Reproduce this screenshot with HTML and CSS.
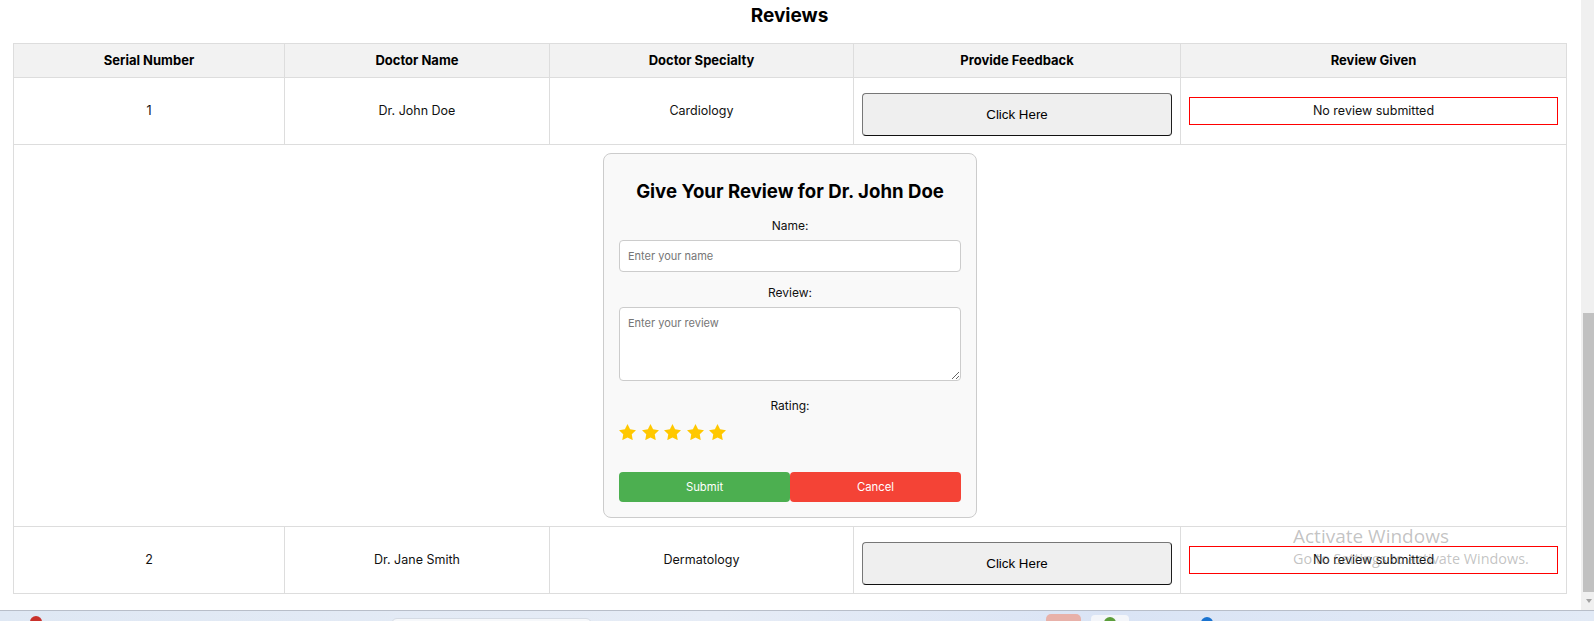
FILE: index.html
```html
<!DOCTYPE html>
<html lang="en">
<head>
<meta charset="utf-8">
<title>Reviews</title>
<link rel="stylesheet" href="styles.css">
</head>
<body>
<div class="screen">
  <div class="browser">
    <main class="page">
      <h2 class="title">Reviews</h2>
      <table class="reviews">
        <colgroup>
          <col class="col-serial">
          <col class="col-name">
          <col class="col-spec">
          <col class="col-feedback">
          <col class="col-given">
        </colgroup>
        <thead>
          <tr>
            <th>Serial Number</th>
            <th>Doctor Name</th>
            <th>Doctor Specialty</th>
            <th>Provide Feedback</th>
            <th>Review Given</th>
          </tr>
        </thead>
        <tbody>
          <tr>
            <td>1</td>
            <td>Dr. John Doe</td>
            <td>Cardiology</td>
            <td><button class="feedback-btn" type="button">Click Here</button></td>
            <td><div class="review-box">No review submitted</div></td>
          </tr>
          <tr class="form-row">
            <td colspan="5">
              <form class="review-card">
                <h3 class="card-title">Give Your Review for Dr. John Doe</h3>
                <label class="lbl lbl-name" for="rname">Name:</label>
                <input class="field" id="rname" type="text" placeholder="Enter your name">
                <label class="lbl lbl-review" for="rtext">Review:</label>
                <textarea class="field area" id="rtext" placeholder="Enter your review"></textarea>
                <label class="lbl lbl-rating">Rating:</label>
                <div class="stars">
                  <svg class="star" viewBox="2 2 20 19.3"><path d="M12 2l3.09 6.26L22 9.27l-5 4.87 1.18 6.88L12 17.77l-6.18 3.25L7 14.14 2 9.27l6.91-1.01L12 2z"/></svg>
                  <svg class="star" viewBox="2 2 20 19.3"><path d="M12 2l3.09 6.26L22 9.27l-5 4.87 1.18 6.88L12 17.77l-6.18 3.25L7 14.14 2 9.27l6.91-1.01L12 2z"/></svg>
                  <svg class="star" viewBox="2 2 20 19.3"><path d="M12 2l3.09 6.26L22 9.27l-5 4.87 1.18 6.88L12 17.77l-6.18 3.25L7 14.14 2 9.27l6.91-1.01L12 2z"/></svg>
                  <svg class="star" viewBox="2 2 20 19.3"><path d="M12 2l3.09 6.26L22 9.27l-5 4.87 1.18 6.88L12 17.77l-6.18 3.25L7 14.14 2 9.27l6.91-1.01L12 2z"/></svg>
                  <svg class="star" viewBox="2 2 20 19.3"><path d="M12 2l3.09 6.26L22 9.27l-5 4.87 1.18 6.88L12 17.77l-6.18 3.25L7 14.14 2 9.27l6.91-1.01L12 2z"/></svg>
                </div>
                <div class="actions">
                  <button class="act submit" type="button">Submit</button>
                  <button class="act cancel" type="button">Cancel</button>
                </div>
              </form>
            </td>
          </tr>
          <tr>
            <td>2</td>
            <td>Dr. Jane Smith</td>
            <td>Dermatology</td>
            <td><button class="feedback-btn" type="button">Click Here</button></td>
            <td><div class="review-box">No review submitted</div></td>
          </tr>
        </tbody>
      </table>
    </main>
    <div class="scrollbar">
      <div class="thumb"></div>
      <div class="arrow"></div>
    </div>
  </div>
  <div class="taskbar">
    <span class="tb tb-red"></span>
    <span class="tb tb-search"></span>
    <span class="tb tb-pink"></span>
    <span class="tb tb-box"><span class="tb-green"></span></span>
    <span class="tb tb-blue"></span>
  </div>
  <div class="watermark">
    <div class="wm-1">Activate Windows</div>
    <div class="wm-2">Go to Settings to activate Windows.</div>
  </div>
</div>
</body>
</html>
```
FILE: styles.css
```css
html, body {
  margin: 0;
  padding: 0;
  background: #fff;
}

body {
  font-family: Inter, "Noto Sans", sans-serif;
  color: #111;
}

.screen {
  position: relative;
  width: 1594px;
  height: 621px;
  display: flex;
  flex-direction: column;
  overflow: hidden;
}

.browser {
  display: flex;
  height: 610px;
}

.page {
  flex: 1;
  padding: 0 15px 0 13px;
  overflow: hidden;
}

.title {
  margin: 0;
  padding-top: 1px;
  height: 42px;
  line-height: 30px;
  font-size: 19px;
  font-weight: 700;
  text-align: center;
  color: #000;
}

.reviews {
  width: 100%;
  border-collapse: collapse;
  table-layout: fixed;
  font-size: 12.5px;
}

.col-serial { width: 271px; }
.col-name { width: 265px; }
.col-spec { width: 304px; }
.col-feedback { width: 327px; }
.col-given { width: 386px; }

.reviews th,
.reviews td {
  border: 1px solid #ddd;
  padding: 8px;
  text-align: center;
  vertical-align: middle;
}

.reviews th {
  background: #f2f2f2;
  font-size: 13px;
  font-weight: 700;
  line-height: 17px;
  color: #000;
}

.reviews td {
  line-height: 18px;
}

.feedback-btn {
  display: block;
  width: 100%;
  height: 43px;
  margin-top: 7px;
  background: #efefef;
  border: 1px solid #666;
  border-color: #777 #1e1e1e #111 #777;
  border-radius: 4px;
  font-family: "Liberation Sans", Arial, sans-serif;
  font-size: 13.33px;
  color: #000;
}

.review-box {
  border: 1px solid #f00;
  padding: 4px;
  line-height: 18px;
}

.review-card {
  width: 342px;
  margin: 0 auto;
  padding: 15px;
  border: 1px solid #ccc;
  border-radius: 8px;
  background: #f9f9f9;
  text-align: center;
}

.card-title {
  margin: 10px 0 0;
  font-size: 18.6px;
  line-height: 24px;
  font-weight: 700;
  color: #000;
}

.lbl {
  display: block;
  font-size: 12px;
  line-height: 18px;
  color: #111;
}

.lbl-name { margin-top: 14px; }
.lbl-review { margin-top: 12px; }
.lbl-rating { margin-top: 16px; }

.field {
  display: block;
  width: 100%;
  box-sizing: border-box;
  height: 32px;
  margin-top: 5px;
  padding: 0 8px;
  border: 1px solid #ccc;
  border-radius: 4px;
  background: #fff;
  font-family: Inter, "Noto Sans", sans-serif;
  font-size: 11px;
  color: #111;
}

.field::placeholder {
  color: #767676;
}

.area {
  height: 74px;
  padding: 8px;
  resize: both;
}

.stars {
  display: flex;
  gap: 5.5px;
  margin-top: 9px;
  height: 17px;
}

.star {
  width: 17px;
  height: 16.4px;
  fill: #ffc800;
}

.actions {
  display: flex;
  margin-top: 31px;
  height: 30px;
}

.act {
  flex: 1;
  border: none;
  border-radius: 4px;
  color: #fff;
  font-family: Inter, "Noto Sans", sans-serif;
  font-size: 11.3px;
  font-weight: 400;
}

.submit { background: #4caf50; }
.cancel { background: #f44336; }

.scrollbar {
  width: 13px;
  background: #f0f0f0;
  display: flex;
  flex-direction: column;
}

.thumb {
  margin-top: 313px;
  margin-left: 2px;
  width: 11px;
  height: 279px;
  background: #c1c1c1;
}

.arrow {
  margin-top: 7px;
  margin-left: 5px;
  width: 0;
  height: 0;
  border-left: 3.5px solid transparent;
  border-right: 3.5px solid transparent;
  border-top: 4px solid #a3a3a3;
}

.taskbar {
  height: 11px;
  box-sizing: border-box;
  border-top: 1px solid #b8bec9;
  background: linear-gradient(90deg, #dfe8f4 0%, #e6ecf6 45%, #dae4f5 70%, #e2eaf6 100%);
  display: flex;
  align-items: flex-start;
  overflow: hidden;
}

.tb {
  display: block;
  flex: none;
}

.tb-red {
  margin-left: 30px;
  margin-top: 5px;
  width: 12px;
  height: 12px;
  border-radius: 50%;
  background: #c9312b;
}

.tb-search {
  margin-left: 349px;
  margin-top: 7px;
  width: 199px;
  height: 12px;
  border-radius: 6px;
  border: 1px solid #d5dbe4;
  background: #f6f8fb;
}

.tb-pink {
  margin-left: 454px;
  margin-top: 3px;
  width: 35px;
  height: 12px;
  border-radius: 5px;
  background: #e8b1a9;
}

.tb-box {
  margin-left: 10px;
  margin-top: 4px;
  width: 38px;
  height: 12px;
  border-radius: 4px;
  background: #f4f6fa;
  display: flex;
  justify-content: center;
}

.tb-green {
  display: block;
  margin-top: 2px;
  width: 12px;
  height: 12px;
  border-radius: 50%;
  background: #5c9e3b;
}

.tb-blue {
  margin-left: 72px;
  margin-top: 6px;
  width: 12px;
  height: 12px;
  border-radius: 50%;
  background: #1a73d0;
}

.watermark {
  position: absolute;
  left: 1293px;
  top: 525px;
  font-family: "Open Sans", "Noto Sans", sans-serif;
  color: rgba(110, 110, 110, 0.42);
  pointer-events: none;
}

.wm-1 {
  font-size: 19px;
  line-height: 22px;
}

.wm-2 {
  margin-top: 2px;
  font-size: 14.4px;
  line-height: 20px;
}
```
